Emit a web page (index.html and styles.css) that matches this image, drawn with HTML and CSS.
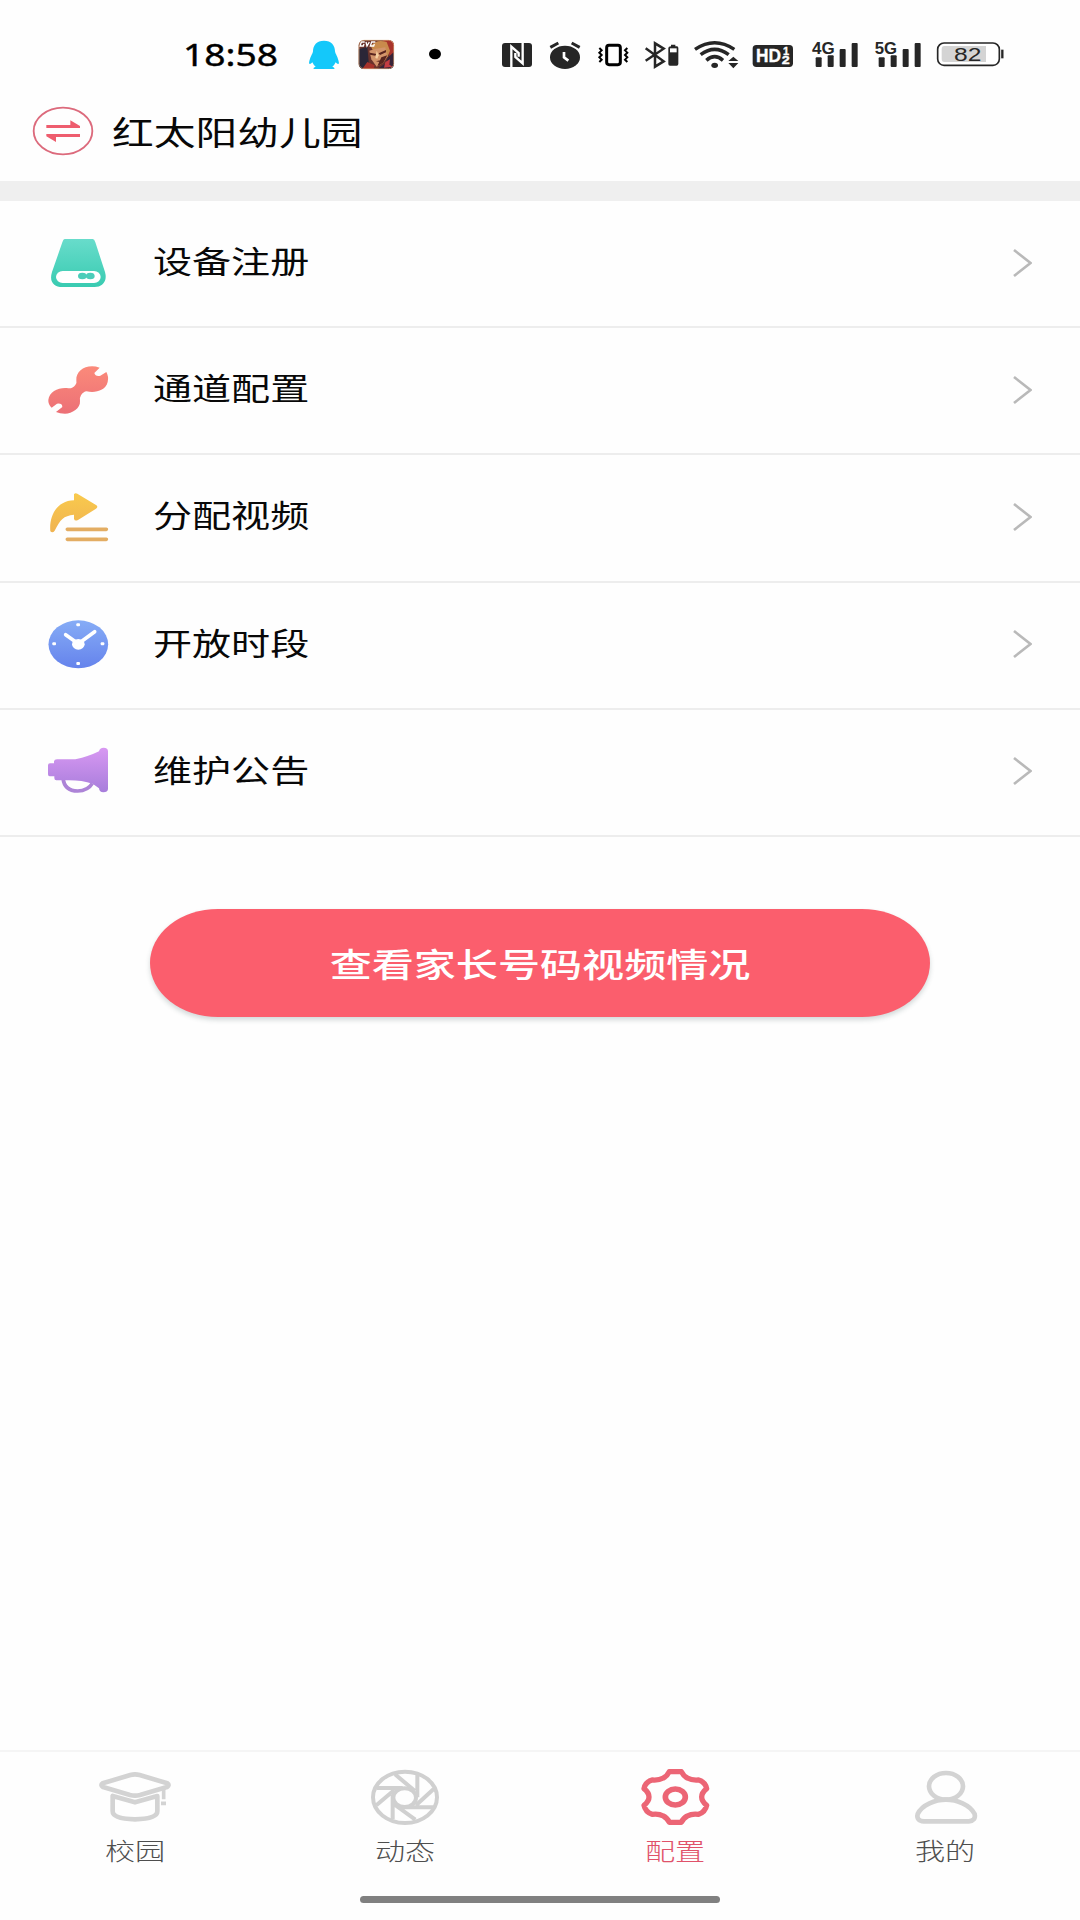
FILE: index.html
```html
<!DOCTYPE html>
<html lang="zh-CN">
<head>
<meta charset="utf-8">
<title>配置</title>
<link rel="stylesheet" href="styles.css">
</head>
<body>
<div class="screen">
  <div class="status">
    <div class="clock"><span>18:58</span></div>
    <svg width="48" height="70" viewBox="420 0 144 210"><path fill="#14c8fa" d="M492 62C470 62 459 76 459 94C459 100 449 112 447 130Q450 135 457 127Q461 136 467 140Q459 142 461 147H523Q525 142 517 140Q523 136 527 127Q534 135 537 130C535 112 525 100 525 94C525 76 514 62 492 62Z"/></svg>
    <svg width="60" height="70" viewBox="564 0 180 210">
      <defs><clipPath id="app"><rect x="596" y="60" width="106" height="87" rx="16"/></clipPath></defs>
      <g clip-path="url(#app)">
        <path fill="#6b332c" d="M590 55H710V150H590Z"/>
        <path fill="#2b2637" d="M596 88L622 80L628 147H596Z"/>
        <path fill="#a8332b" d="M668 60H704V96L690 112L680 80ZM622 126L644 136L640 148H606Z"/>
        <path fill="#c98a4c" d="M632 78Q650 56 680 66L690 92L682 112L668 84L640 94Z"/>
        <path fill="#d3946b" d="M628 92L648 86L676 82L682 110L670 128L650 140L634 118Z"/>
        <path fill="#5a251f" d="M630 98L650 102L646 107L630 104ZM656 100L678 90L678 97L660 105ZM648 124L664 120L660 126ZM664 112L682 106L670 128L652 139Z"/>
        <path fill="#f6cfa0" d="M650 92L656 106L652 116L646 114Z"/>
        <path fill="#372338" d="M684 112L704 94V147H652L674 132Z"/>
        <path fill="#c43c42" d="M676 126L690 118L688 134L698 140L672 143Z"/>
        <path fill="none" stroke="#fff" stroke-width="4" d="M614 66H604L600 78H610L612 72M618 66L621 78L628 66M646 66H635L631 78H641L643 72"/>
      </g>
      <rect x="597" y="61" width="104" height="85" rx="15" fill="none" stroke="#d9a878" stroke-width="2"/>
    </svg>
    <svg width="82" height="70" viewBox="744 0 246 210"><ellipse cx="825" cy="102" rx="18" ry="15.500"/></svg>
    <svg width="50" height="70" viewBox="30 0 150 210"><rect x="66" y="69" width="90" height="72" rx="9" fill="#262626"/><path d="M94 141V80L116 99V110M128 69V130L106 111V99" fill="none" stroke="#fff" stroke-width="7"/></svg>
    <svg width="50" height="70" viewBox="180 0 150 210"><ellipse cx="255" cy="112" rx="45" ry="35" fill="#262626"/><path d="M211 82L235 69M275 69L299 82" stroke="#262626" stroke-width="9"/><path d="M252 96V112L265 122" fill="none" stroke="#fff" stroke-width="8"/></svg>
    <svg width="48" height="70" viewBox="330 0 144 210"><rect x="380" y="76" width="41" height="58" rx="7" fill="none" stroke="#000" stroke-width="9"/><path d="M358 84L365 91L358 98L365 105L358 112L365 119L358 126M442 84L435 91L442 98L435 105L442 112L435 119L442 126" fill="none" stroke="#000" stroke-width="6"/></svg>
    <svg width="48" height="70" viewBox="474 0 144 210"><path d="M497 85L551 124L525 140V70L551 86L497 122" fill="none" stroke="#262626" stroke-width="7.500"/><path fill="#262626" d="M573 74H586V79H591Q595 79 595 84V132Q595 137 590 137H570Q565 137 565 132V84Q565 79 573 79Z"/><rect x="570" y="85" width="20" height="12" fill="#fff"/></svg>
    <svg width="59" height="70" viewBox="618 0 177 210"><path d="M645 88Q704 48 763 88M662 104Q704 72 746 104M679 121Q704 99 729 121" fill="none" stroke="#262626" stroke-width="10.500"/><ellipse cx="704" cy="136" rx="10" ry="8" fill="#262626"/><path fill="#262626" d="M745 123L760 110L775 123ZM745 129H775L760 145Z"/></svg>
    <svg width="58" height="70" viewBox="15 0 174 210"><rect x="38" y="75" width="121" height="66" rx="11" fill="#262626"/><text class="glyph glyph-bold" x="48" y="126" font-size="53" textLength="75" lengthAdjust="spacingAndGlyphs">HD</text><text class="glyph glyph-bold" x="129" y="106" font-size="33">1</text><text class="glyph glyph-bold" x="125" y="133" font-size="33" textLength="24" lengthAdjust="spacingAndGlyphs">2</text></svg>
    <svg width="63" height="70" viewBox="189 0 189 210"><g fill="#262626"><rect x="227" y="112" width="18" height="29" rx="3"/><rect x="263" y="106" width="18" height="35" rx="3"/><rect x="299" y="87" width="18" height="54" rx="3"/><rect x="335" y="69" width="18" height="72" rx="3"/><text class="glyph" x="216" y="101" font-size="49" textLength="68" lengthAdjust="spacingAndGlyphs">4G</text></g></svg>
    <svg width="63" height="70" viewBox="378 0 189 210"><g fill="#262626"><rect x="416" y="112" width="18" height="29" rx="3"/><rect x="452" y="106" width="18" height="35" rx="3"/><rect x="488" y="87" width="18" height="54" rx="3"/><rect x="524" y="69" width="18" height="72" rx="3"/><text class="glyph" x="404" y="101" font-size="49" textLength="67" lengthAdjust="spacingAndGlyphs">5G</text></g></svg>
    <svg width="81" height="70" viewBox="567 0 243 210"><rect x="593" y="69" width="185" height="67" rx="19" fill="#fff" stroke="#262626" stroke-width="5"/><path fill="#d4d4d4" d="M613 78H738V126H613Q605 126 605 117V87Q605 78 613 78Z"/><path d="M787 89V115" stroke="#262626" stroke-width="7"/><text class="level" x="642" y="123" font-size="56" textLength="82" lengthAdjust="spacingAndGlyphs" fill="#262626">82</text></svg>
  </div>

  <header class="header">
    <svg width="64" height="52" viewBox="93 45 192 156"><ellipse cx="189" cy="123" rx="88" ry="70" fill="none" stroke="#dc6a7c" stroke-width="5.500"/><path fill="#ee5d6e" d="M139 105H211V91L240 108V114H139ZM240 132V141H168V156L139 139V132Z"/></svg>
    <h1 class="title">红太阳幼儿园</h1>
  </header>

  <ul class="menu">
    <li class="row">
      <svg class="icon" viewBox="126 429 216 180"><defs><linearGradient id="g1" x2="0" y2="1"><stop stop-color="#68dccb"/><stop offset="1" stop-color="#39cbb1"/></linearGradient></defs><path fill="url(#g1)" d="M194 447H278Q283 447 286 457L315 546Q322 572 306 584Q298 591 284 591H187Q171 591 163 584Q148 572 156 546L187 457Q190 447 194 447Z"/><rect x="168" y="543" width="134" height="36" rx="20" fill="#fff"/><path d="M247 558H271" stroke="#4bd0ba" stroke-width="8"/><ellipse cx="247" cy="558" rx="13" ry="10" fill="#4bcdb9"/><ellipse cx="271" cy="558" rx="13" ry="10" fill="#4bcdb9"/></svg>
      <span class="label">设备注册</span>
      <svg class="chevron" viewBox="0 0 20 30"><path d="M2 2L18.500 15L2 28"/></svg>
    </li>
    <li class="row">
      <svg class="icon" viewBox="126 91 216 180"><defs><linearGradient id="g2" x2="0" y2="1"><stop stop-color="#fb8a7a"/><stop offset="1" stop-color="#ec7076"/></linearGradient></defs><path fill="url(#g2)" d="M299 114L283 130Q286 141 301 138L319 127Q327 141 323 157C317 183 285 191 260 185Q250 186 243 197Q238 205 240 214C242 236 216 252 195 252Q179 252 168 247L187 232Q187 220 171 222L155 234Q144 224 145 211C148 185 178 172 205 176Q218 177 226 166Q231 159 229 152C227 121 262 101 299 114Z"/></svg>
      <span class="label">通道配置</span>
      <svg class="chevron" viewBox="0 0 20 30"><path d="M2 2L18.500 15L2 28"/></svg>
    </li>
    <li class="row">
      <svg class="icon" viewBox="126 472 216 180"><defs><linearGradient id="g3" x2="0" y2="1"><stop stop-color="#f9ca4d"/><stop offset="1" stop-color="#f0b351"/></linearGradient></defs><path fill="url(#g3)" d="M222 494Q225 489 232 492L288 526Q296 531 288 537L234 571Q224 576 222 567V555C190 558 181 570 164 603Q158 612 151 605C147 562 167 514 222 512Z"/><path d="M202 599H319M202 629H319" stroke="#e3ad63" stroke-width="11" stroke-linecap="round"/></svg>
      <span class="label">分配视频</span>
      <svg class="chevron" viewBox="0 0 20 30"><path d="M2 2L18.500 15L2 28"/></svg>
    </li>
    <li class="row">
      <svg class="icon" viewBox="126 74 216 180"><defs><linearGradient id="g4" x2="0" y2="1"><stop stop-color="#86acf6"/><stop offset="1" stop-color="#6583ec"/></linearGradient></defs><ellipse cx="235" cy="165" rx="89.500" ry="72" fill="url(#g4)"/><g fill="#fff"><rect x="229" y="102" width="11" height="9" rx="3"/><rect x="229" y="218" width="11" height="9" rx="3"/><rect x="157" y="159" width="11" height="9" rx="3"/><rect x="302" y="159" width="11" height="9" rx="3"/><ellipse cx="235" cy="165" rx="19" ry="16"/></g><path d="M197 136L235 163L284 127" fill="none" stroke="#fff" stroke-width="11" stroke-linecap="round"/></svg>
      <span class="label">开放时段</span>
      <svg class="chevron" viewBox="0 0 20 30"><path d="M2 2L18.500 15L2 28"/></svg>
    </li>
    <li class="row">
      <svg class="icon" viewBox="126 455 216 180"><defs><linearGradient id="g5" x2="0" y2="1"><stop stop-color="#d898f2"/><stop offset="1" stop-color="#a77ddb"/></linearGradient></defs><path d="M189 566Q193 605 233 605Q264 604 277 582" fill="none" stroke="#ad84d7" stroke-width="11"/><path fill="url(#g5)" d="M297 486Q299 475 311 475Q324 475 324 486V599Q323 609 310 609Q298 609 297 597L278 583Q240 571 196 573H169Q163 573 163 566V561H149Q144 561 144 555V528Q144 522 150 522H162V516Q163 510 171 510H226Q267 501 297 486Z"/></svg>
      <span class="label">维护公告</span>
      <svg class="chevron" viewBox="0 0 20 30"><path d="M2 2L18.500 15L2 28"/></svg>
    </li>
  </ul>

  <button class="action"><span>查看家长号码视频情况</span></button>

  <nav class="tabs">
    <a class="tab">
      <svg viewBox="90 75 270 195"><g fill="none" stroke="#d3d3d3" stroke-width="14" stroke-linejoin="round"><path d="M128 130L211 105Q225 101 239 105L322 130Q330 135 321 141L240 165Q225 169 210 165L129 141Q120 135 128 130Z"/><path d="M158 168V214Q158 237 225 238Q292 237 292 214V168L225 187Z"/></g><path d="M311 140V178M303 190H318" stroke="#d3d3d3" stroke-width="11"/></svg>
      <span>校园</span>
    </a>
    <a class="tab">
      <svg viewBox="900 75 270 195"><g fill="none" stroke="#d0d0d0" stroke-width="12"><ellipse cx="1035" cy="172" rx="96" ry="77"/><ellipse cx="1034" cy="173" rx="34" ry="28"/><path d="M1005 103L1064 152M1072 104V172M1121 147L1068 196M1121 202H1029M1066 239L1001 192M998 238V165M949 196L1003 150M950 144H1028"/></g></svg>
      <span>动态</span>
    </a>
    <a class="tab tab-active">
      <svg viewBox="90 75 270 195"><g fill="none" stroke="#ec6575" stroke-width="16" stroke-linejoin="round"><path d="M208 95H244Q251 109 262 114Q276 122 296 120Q316 126 320 146Q305 158 305 171Q305 184 320 196Q316 216 296 223Q276 220 262 228Q251 233 244 247H208Q201 233 190 228Q176 220 156 223Q136 216 132 196Q147 184 147 171Q147 158 132 146Q136 126 156 120Q176 122 190 114Q201 109 208 95Z"/><ellipse cx="226" cy="171" rx="30" ry="24" stroke-width="17"/></g></svg>
      <span>配置</span>
    </a>
    <a class="tab">
      <svg viewBox="900 75 270 195"><g fill="none" stroke="#d3d3d3" stroke-width="14"><ellipse cx="1038" cy="139" rx="51" ry="40"/><path d="M972 244H1106Q1128 242 1124 222C1110 194 1070 179 1038 179C1006 179 966 194 953 222Q948 242 972 244Z"/></g></svg>
      <span>我的</span>
    </a>
  </nav>
  <div class="home"></div>
</div>
</body>
</html>
```
FILE: styles.css
```css
* { box-sizing: border-box; margin: 0; padding: 0; }
body { background: #fff; font-family: "Noto Sans CJK SC", sans-serif; color: #080808; }
svg { display: block; flex: none; }
.screen { width: 1080px; height: 1920px; background: #fefefe; display: flex; flex-direction: column; overflow: hidden; }

.status { display: flex; height: 101px; padding-top: 20px; }
.clock { width: 300px; height: 70px; padding-left: 183px; line-height: 69px; font-family: "Noto Sans", sans-serif; font-size: 30px; font-weight: 400; color: #000; }
.clock span { display: inline-block; transform: scaleX(1.24); transform-origin: left; -webkit-text-stroke: .4px #000; }
.glyph { font-family: "Liberation Sans", sans-serif; font-weight: 700; }
.glyph-bold { fill: #fff; stroke: #fff; stroke-width: 1px; }
.level { font-family: "Liberation Sans", sans-serif; }

.header { display: flex; align-items: center; height: 80px; padding: 0 0 20px 31px; }
.title { margin-left: 17px; font-size: 33px; line-height: 60px; font-weight: 400; transform: scaleX(1.265); transform-origin: left; white-space: nowrap; }

.menu { list-style: none; border-top: 20px solid #efefef; }
.row { display: flex; align-items: center; height: 127.200px; border-bottom: 2px solid #ededed; padding: 0 48px 2px 42px; }
.icon { width: 72px; height: 60px; }
.label { margin: 0 0 5px 39px; font-size: 31px; line-height: 60px; transform: scaleX(1.26); transform-origin: left; }
.chevron { width: 20px; height: 30px; margin-left: auto; fill: none; stroke: #b9b9b9; stroke-width: 2.6; }

.action { align-self: center; flex: none; width: 780px; height: 108px; margin-top: 72px; border: 0; border-radius: 68px / 54px; background: #fb5e6d; box-shadow: 0 3px 5px rgba(40, 70, 70, .2); color: #fff; font-family: inherit; font-size: 33px; font-weight: 500; line-height: 60px; }
.action span { display: inline-block; transform: scaleX(1.275); white-space: nowrap; }

.tabs { display: grid; grid-template-columns: repeat(4, 1fr); height: 146px; flex: none; margin-top: auto; border-top: 2px solid #f5f5f5; }
.tab { display: flex; flex-direction: column; align-items: center; padding-top: 13px; font-size: 24px; font-weight: 300; line-height: 40px; color: #4e4e4e; }
.tab svg { width: 90px; height: 65px; }
.tab span { transform: scaleX(1.255); }
.tab-active { color: #e0526a; }
.home { align-self: center; flex: none; width: 360px; height: 7px; margin-bottom: 17px; border-radius: 4px; background: #808080; }
```
